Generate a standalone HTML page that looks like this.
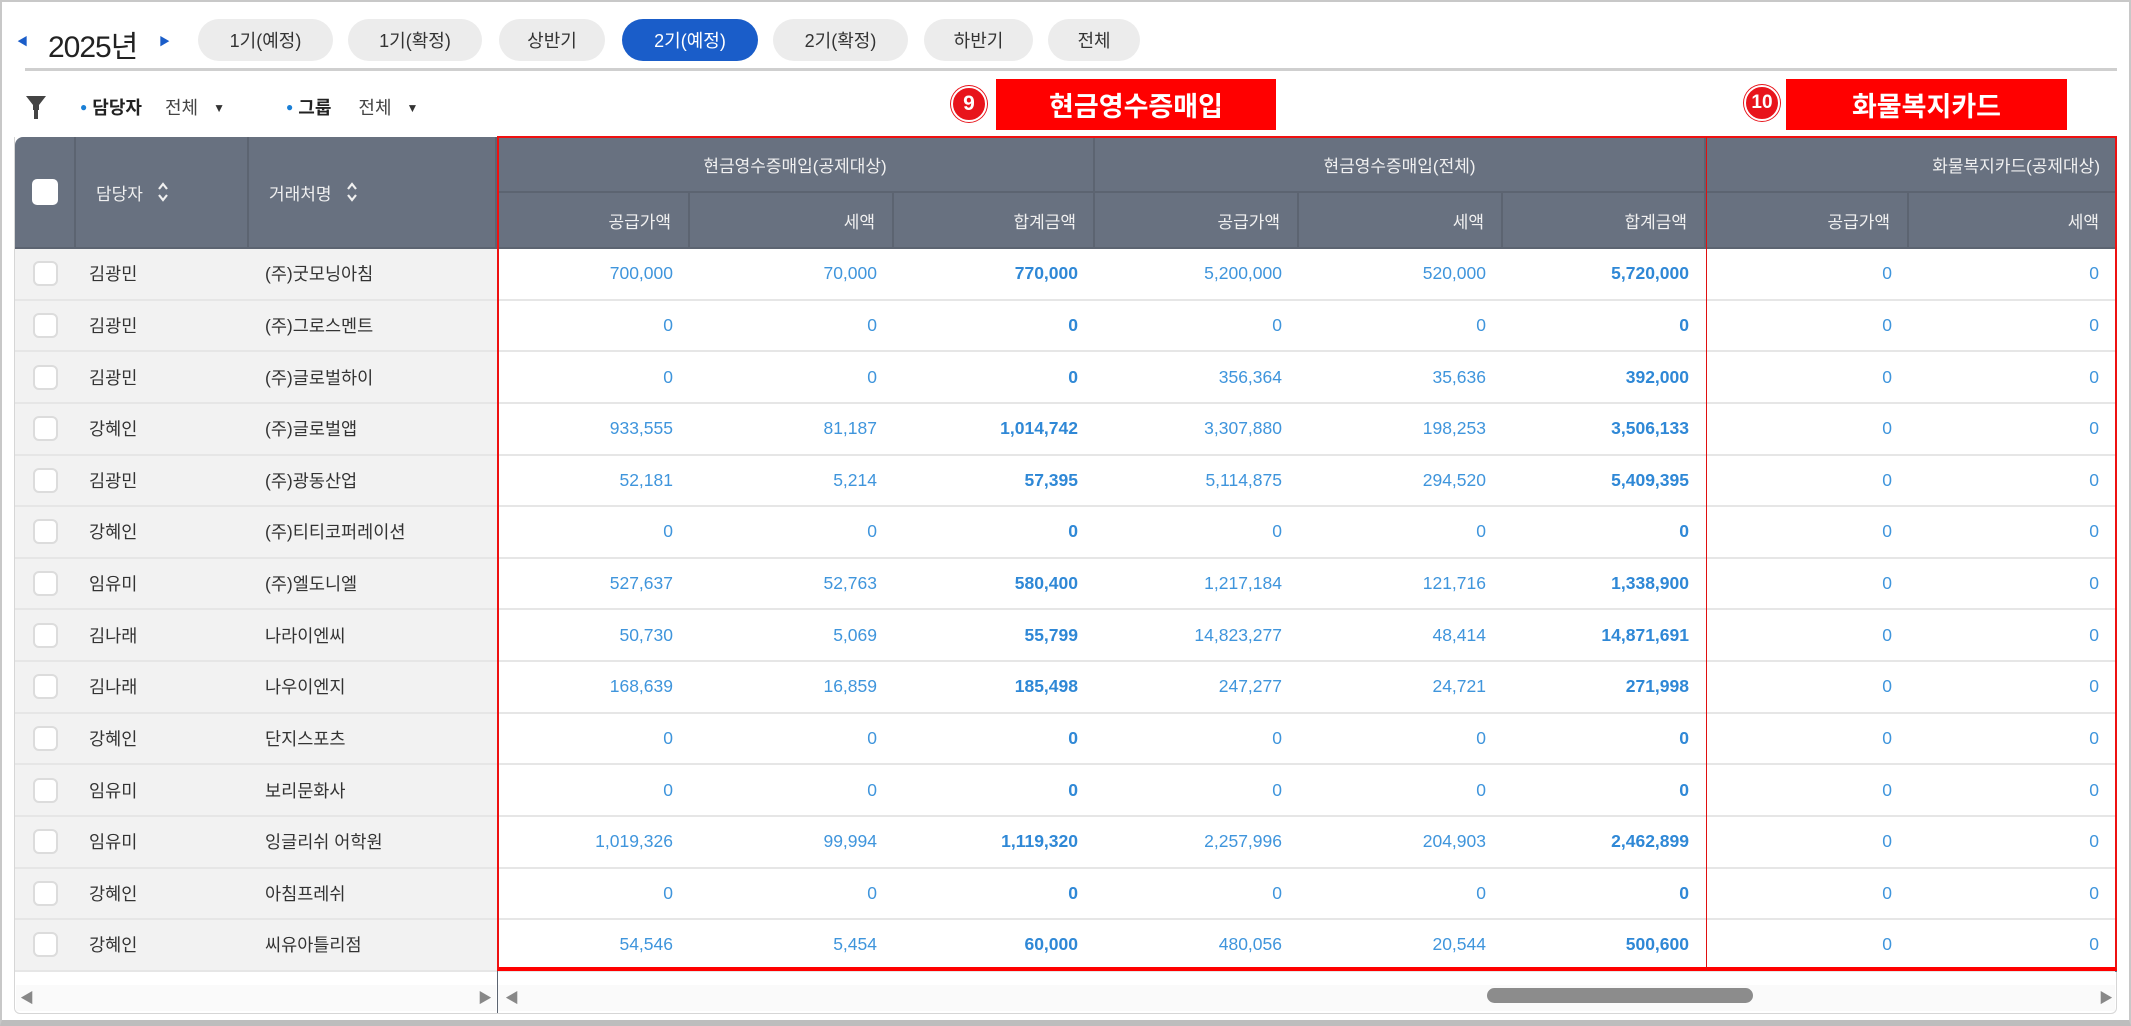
<!DOCTYPE html>
<html><head><meta charset="utf-8"><style>
*{box-sizing:border-box;margin:0;padding:0}
body{width:2131px;height:1026px;background:#fff;position:relative;overflow:hidden;font-family:"Liberation Sans","Noto Sans CJK KR",sans-serif;color:#333}
.frame{position:absolute;left:0;top:0;width:2131px;height:1026px;border:2px solid #c8c8c8;border-bottom:6px solid #bdbdbd}
.a{position:absolute}
.btn{position:absolute;top:19px;height:42px;border-radius:21px;background:#ececec;font-size:18px;color:#333;display:flex;align-items:center;justify-content:center}
.btn.on{background:#1a5dc9;color:#fff}
.hd{position:absolute;background:#687180;color:#f0f0f0;font-size:17px;display:flex;align-items:center;border-right:2px solid #5c6471;border-bottom:2px solid #5c6471}
.rows{position:absolute;left:15px;top:249px;width:2101px}
.r{display:grid;grid-template-columns:61px 173px 248px 193px 204px 201px 204px 204px 203px 203px 207px;height:51.64px;border-bottom:2px solid #e6e6e6}
.r>div{display:flex;align-items:center;font-size:17.5px;color:#3f95dc;justify-content:flex-end;padding-right:17px}
.r>div:nth-child(1),.r>div:nth-child(2),.r>div:nth-child(3){background:#f2f2f2;color:#333;justify-content:flex-start;padding-right:0}
.r>div:nth-child(2){padding-left:13px}
.r>div:nth-child(3){padding-left:16px}
.r>div:nth-child(6),.r>div:nth-child(9){font-weight:bold;color:#2f88d6}
.cb{width:25px;height:25px;border:2px solid #dcdcdc;border-radius:6px;background:#fff;margin-left:18px}
.badge{position:absolute;width:36px;height:36px;border-radius:50%;background:#e8141b;color:#fff;font-weight:bold;font-size:21px;display:flex;align-items:center;justify-content:center;border:2px solid #fff;box-shadow:0 0 0 1px #e8141b}
.lbl{position:absolute;background:#ff0000;color:#fff;font-weight:bold;font-size:27px;display:flex;align-items:center;justify-content:center}
.sort{display:inline-block;margin-left:14px;vertical-align:middle}
</style></head><body>
<div class="frame"></div>
<div class="a" style="left:17px;top:33px;font-size:11px;color:#1a5dc9">&#9664;</div>
<div class="a" style="left:48px;top:22px;font-size:30px;color:#222;letter-spacing:-1px">2025년</div>
<div class="a" style="left:159px;top:33px;font-size:11px;color:#1a5dc9">&#9654;</div>
<div class="btn" style="left:198px;width:135px">1기(예정)</div>
<div class="btn" style="left:348px;width:134px">1기(확정)</div>
<div class="btn" style="left:499px;width:106px">상반기</div>
<div class="btn on" style="left:622px;width:136px">2기(예정)</div>
<div class="btn" style="left:773px;width:135px">2기(확정)</div>
<div class="btn" style="left:924px;width:109px">하반기</div>
<div class="btn" style="left:1048px;width:92px">전체</div>
<div class="a" style="left:25px;top:68px;width:2092px;height:3px;background:#cfcfcf"></div>
<svg class="a" style="left:25px;top:94px" width="22" height="26" viewBox="0 0 22 26"><path d="M1 2h20l-7 9v5h-6v-5z" fill="#444"/><rect x="9" y="16" width="4" height="9" fill="#444"/></svg>
<div class="a" style="left:80px;top:94px;font-size:18px;"><span style="color:#1a7fd6;font-size:12px;vertical-align:3px">●</span> <b style="color:#222">담당자</b> <span style="margin-left:18px;color:#444">전체</span> <span style="font-size:12px;margin-left:10px;vertical-align:2px">▼</span></div>
<div class="a" style="left:286px;top:94px;font-size:18px;"><span style="color:#1a7fd6;font-size:12px;vertical-align:3px">●</span> <b style="color:#222">그룹</b> <span style="margin-left:22px;color:#444">전체</span> <span style="font-size:12px;margin-left:10px;vertical-align:2px">▼</span></div>
<div class="badge" style="left:951px;top:86px">9</div>
<div class="lbl" style="left:996px;top:79px;width:280px;height:51px">현금영수증매입</div>
<div class="badge" style="left:1744px;top:85px;font-size:19px">10</div>
<div class="lbl" style="left:1786px;top:79px;width:281px;height:51px">화물복지카드</div>

<!-- header -->
<div class="hd" style="left:15px;top:137px;width:61px;height:112px;justify-content:center;border-top-left-radius:8px"><div style="width:26px;height:26px;background:#fff;border-radius:5px"></div></div>
<div class="hd" style="left:76px;top:137px;width:173px;height:112px;padding-left:20px">담당자<svg class="sort" width="12" height="22" viewBox="0 0 12 22"><path d="M2 8l4-5 4 5M2 14l4 5 4-5" stroke="#f0f0f0" stroke-width="2.2" fill="none"/></svg></div>
<div class="hd" style="left:249px;top:137px;width:248px;height:112px;padding-left:20px">거래처명<svg class="sort" width="12" height="22" viewBox="0 0 12 22"><path d="M2 8l4-5 4 5M2 14l4 5 4-5" stroke="#f0f0f0" stroke-width="2.2" fill="none"/></svg></div>
<div class="hd" style="left:497px;top:137px;width:598px;height:56px;justify-content:center">현금영수증매입(공제대상)</div>
<div class="hd" style="left:1095px;top:137px;width:611px;height:56px;justify-content:center">현금영수증매입(전체)</div>
<div class="hd" style="left:1706px;top:137px;width:410px;height:56px;justify-content:flex-end;padding-right:16px;border-right:none">화물복지카드(공제대상)</div>
<div class="hd" style="left:497px;top:193px;width:193px;height:56px;justify-content:flex-end;padding-right:17px">공급가액</div>
<div class="hd" style="left:690px;top:193px;width:204px;height:56px;justify-content:flex-end;padding-right:17px">세액</div>
<div class="hd" style="left:894px;top:193px;width:201px;height:56px;justify-content:flex-end;padding-right:17px">합계금액</div>
<div class="hd" style="left:1095px;top:193px;width:204px;height:56px;justify-content:flex-end;padding-right:17px">공급가액</div>
<div class="hd" style="left:1299px;top:193px;width:204px;height:56px;justify-content:flex-end;padding-right:17px">세액</div>
<div class="hd" style="left:1503px;top:193px;width:203px;height:56px;justify-content:flex-end;padding-right:17px">합계금액</div>
<div class="hd" style="left:1706px;top:193px;width:203px;height:56px;justify-content:flex-end;padding-right:17px">공급가액</div>
<div class="hd" style="left:1909px;top:193px;width:207px;height:56px;justify-content:flex-end;padding-right:17px;border-right:none">세액</div>

<div class="rows">
<div class="r"><div><div class="cb"></div></div><div>김광민</div><div>(주)굿모닝아침</div><div>700,000</div><div>70,000</div><div>770,000</div><div>5,200,000</div><div>520,000</div><div>5,720,000</div><div>0</div><div>0</div></div>
<div class="r"><div><div class="cb"></div></div><div>김광민</div><div>(주)그로스멘트</div><div>0</div><div>0</div><div>0</div><div>0</div><div>0</div><div>0</div><div>0</div><div>0</div></div>
<div class="r"><div><div class="cb"></div></div><div>김광민</div><div>(주)글로벌하이</div><div>0</div><div>0</div><div>0</div><div>356,364</div><div>35,636</div><div>392,000</div><div>0</div><div>0</div></div>
<div class="r"><div><div class="cb"></div></div><div>강혜인</div><div>(주)글로벌앱</div><div>933,555</div><div>81,187</div><div>1,014,742</div><div>3,307,880</div><div>198,253</div><div>3,506,133</div><div>0</div><div>0</div></div>
<div class="r"><div><div class="cb"></div></div><div>김광민</div><div>(주)광동산업</div><div>52,181</div><div>5,214</div><div>57,395</div><div>5,114,875</div><div>294,520</div><div>5,409,395</div><div>0</div><div>0</div></div>
<div class="r"><div><div class="cb"></div></div><div>강혜인</div><div>(주)티티코퍼레이션</div><div>0</div><div>0</div><div>0</div><div>0</div><div>0</div><div>0</div><div>0</div><div>0</div></div>
<div class="r"><div><div class="cb"></div></div><div>임유미</div><div>(주)엘도니엘</div><div>527,637</div><div>52,763</div><div>580,400</div><div>1,217,184</div><div>121,716</div><div>1,338,900</div><div>0</div><div>0</div></div>
<div class="r"><div><div class="cb"></div></div><div>김나래</div><div>나라이엔씨</div><div>50,730</div><div>5,069</div><div>55,799</div><div>14,823,277</div><div>48,414</div><div>14,871,691</div><div>0</div><div>0</div></div>
<div class="r"><div><div class="cb"></div></div><div>김나래</div><div>나우이엔지</div><div>168,639</div><div>16,859</div><div>185,498</div><div>247,277</div><div>24,721</div><div>271,998</div><div>0</div><div>0</div></div>
<div class="r"><div><div class="cb"></div></div><div>강혜인</div><div>단지스포츠</div><div>0</div><div>0</div><div>0</div><div>0</div><div>0</div><div>0</div><div>0</div><div>0</div></div>
<div class="r"><div><div class="cb"></div></div><div>임유미</div><div>보리문화사</div><div>0</div><div>0</div><div>0</div><div>0</div><div>0</div><div>0</div><div>0</div><div>0</div></div>
<div class="r"><div><div class="cb"></div></div><div>임유미</div><div>잉글리쉬 어학원</div><div>1,019,326</div><div>99,994</div><div>1,119,320</div><div>2,257,996</div><div>204,903</div><div>2,462,899</div><div>0</div><div>0</div></div>
<div class="r"><div><div class="cb"></div></div><div>강혜인</div><div>아침프레쉬</div><div>0</div><div>0</div><div>0</div><div>0</div><div>0</div><div>0</div><div>0</div><div>0</div></div>
<div class="r"><div><div class="cb"></div></div><div>강혜인</div><div>씨유아틀리점</div><div>54,546</div><div>5,454</div><div>60,000</div><div>480,056</div><div>20,544</div><div>500,600</div><div>0</div><div>0</div></div>
</div>
<!-- table borders -->
<div class="a" style="left:14px;top:137px;width:2103px;height:877px;border:1px solid #d6d6d6;border-top:none;border-radius:0 0 6px 6px"></div>
<div class="a" style="left:2115px;top:137px;width:2px;height:835px;background:#687180"></div>
<div class="a" style="left:497px;top:249px;width:1px;height:764px;background:#5c6471"></div>
<div class="a" style="left:1706px;top:249px;width:1px;height:722px;background:#5c6471"></div>
<!-- red outline -->
<div class="a" style="left:497px;top:136px;width:1620px;height:835px;border:2px solid #ee1111;border-bottom:4px solid #ff0000"></div>
<div class="a" style="left:1706px;top:137px;width:1px;height:834px;background:#e01010"></div>
<!-- scrollbar -->
<div class="a" style="left:16px;top:985px;width:480px;height:26px;background:#fafafa"></div>
<div class="a" style="left:498px;top:985px;width:1617px;height:26px;background:#fafafa"></div>
<div class="a" style="left:20px;top:988px;font-size:14px;color:#888">◀</div>
<div class="a" style="left:478px;top:988px;font-size:14px;color:#888">▶</div>
<div class="a" style="left:505px;top:988px;font-size:14px;color:#888">◀</div>
<div class="a" style="left:2099px;top:988px;font-size:14px;color:#888">▶</div>
<div class="a" style="left:1487px;top:988px;width:266px;height:15px;background:#8c8c8c;border-radius:8px"></div>
</body></html>
